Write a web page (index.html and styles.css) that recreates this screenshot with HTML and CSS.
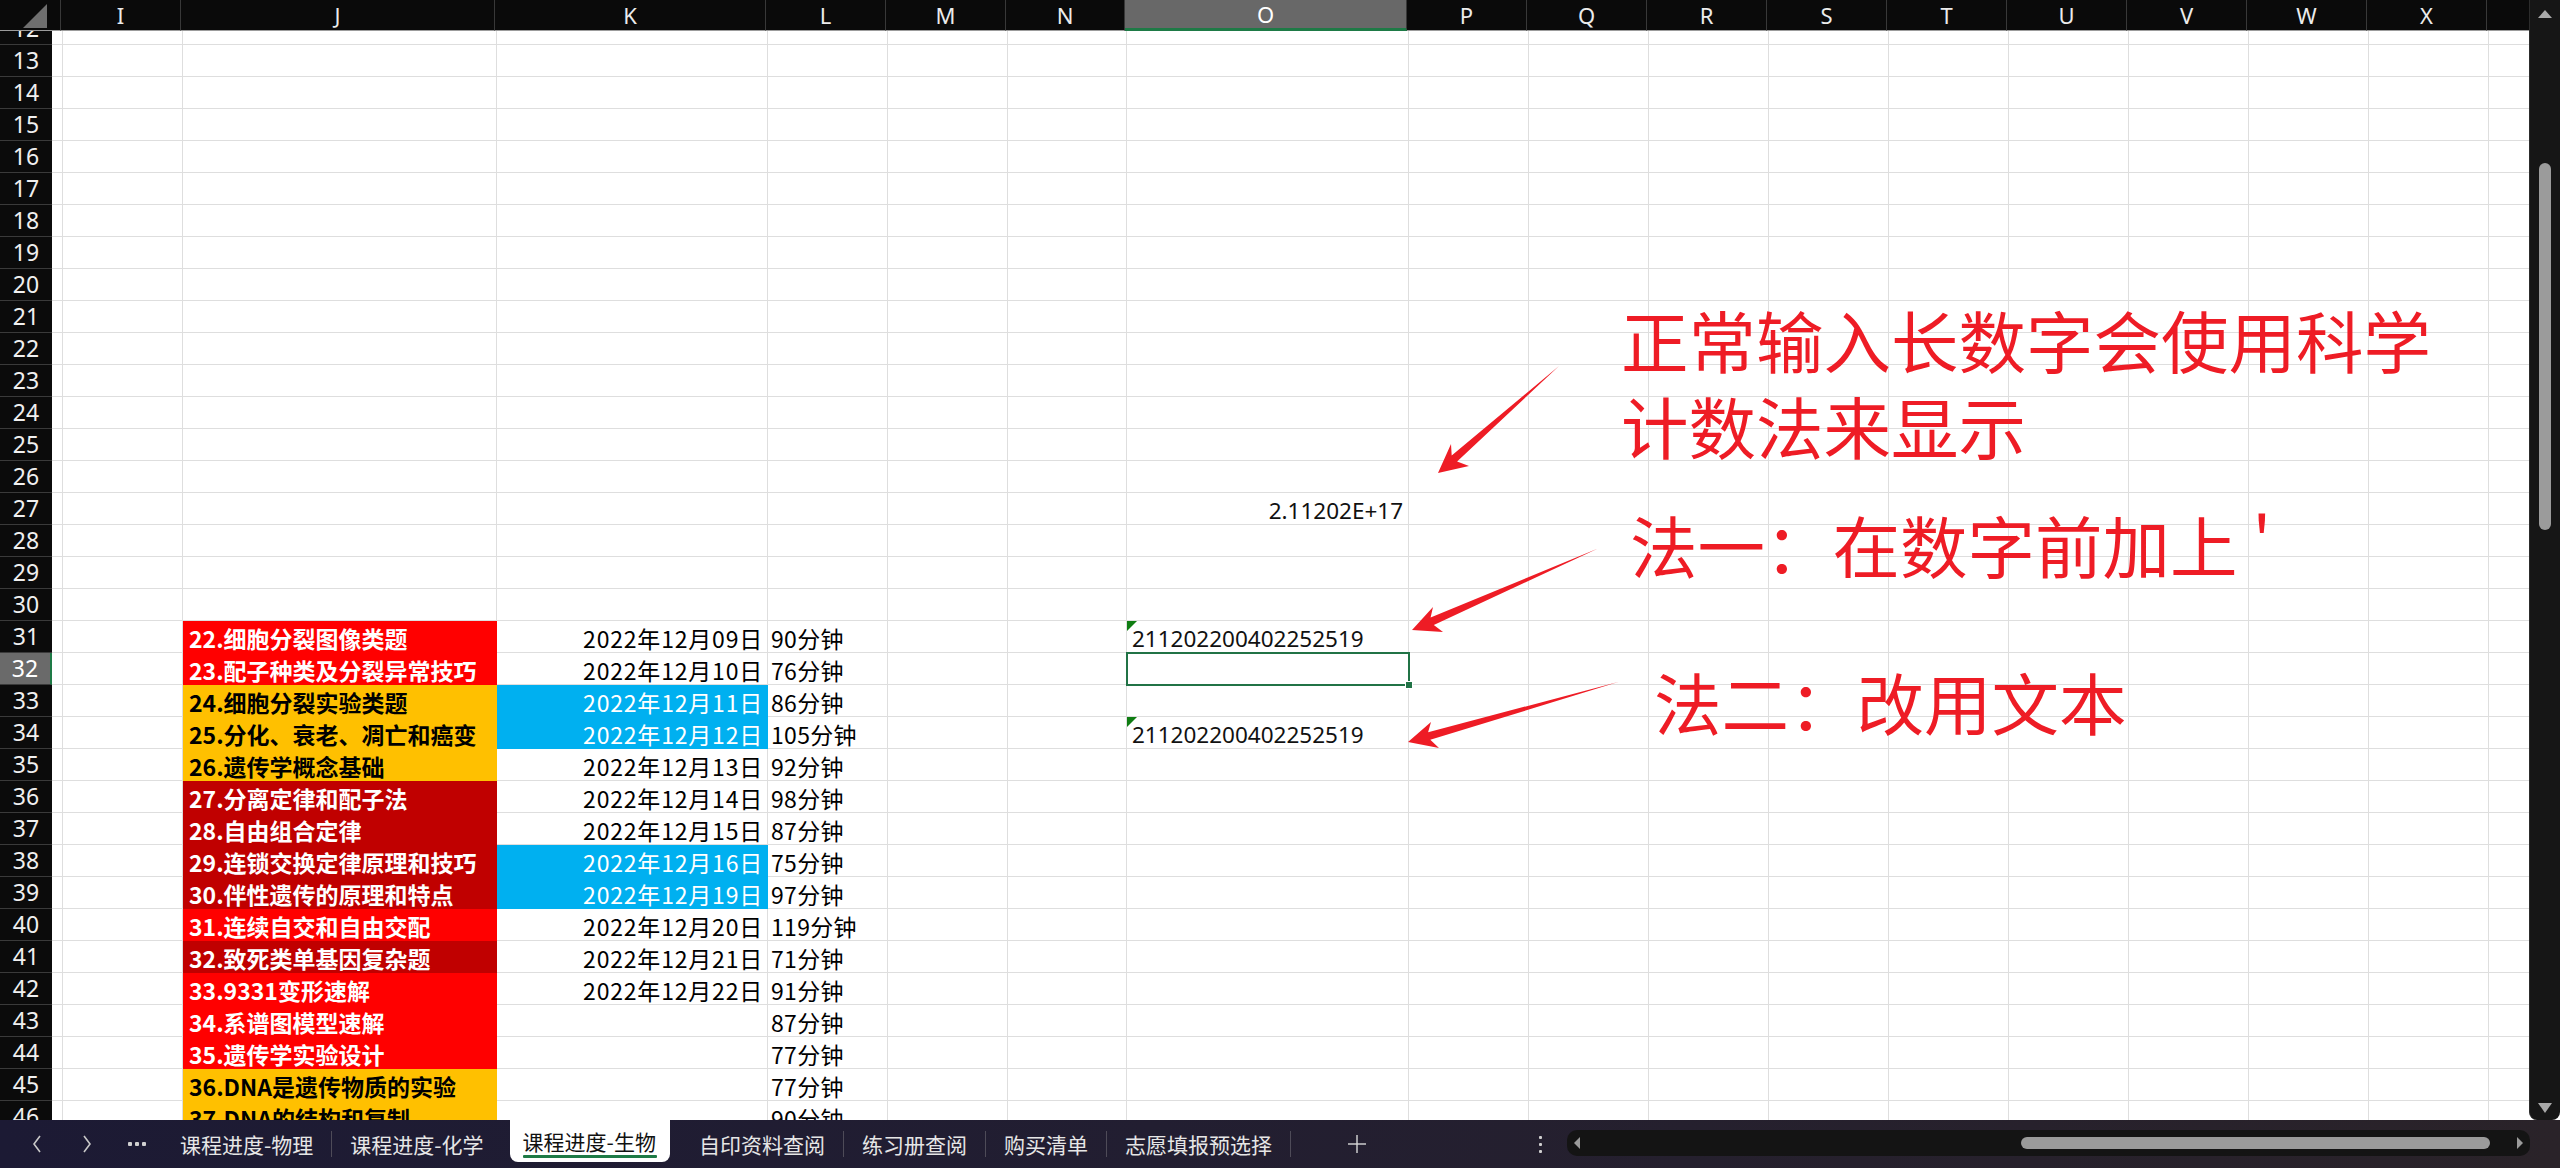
FILE: index.html
```html
<!DOCTYPE html>
<html lang="zh-CN">
<head>
<meta charset="utf-8">
<title>课程进度-生物</title>
<link rel="stylesheet" href="styles.css">
</head>
<body>
<div class="app">
  <div class="main">
    <div class="sheet">
      <div class="colhdr">
        <div class="corner"><span class="tri"></span></div>
        <div class="hc wh"></div>
        <div class="hc wi">I</div>
        <div class="hc wj">J</div>
        <div class="hc wk">K</div>
        <div class="hc wl">L</div>
        <div class="hc wm">M</div>
        <div class="hc wn">N</div>
        <div class="hc wo sel">O</div>
        <div class="hc ws">P</div>
        <div class="hc ws">Q</div>
        <div class="hc ws">R</div>
        <div class="hc ws">S</div>
        <div class="hc ws">T</div>
        <div class="hc ws">U</div>
        <div class="hc ws">V</div>
        <div class="hc ws">W</div>
        <div class="hc ws">X</div>
        <div class="hc wy"></div>
      </div>

      <div class="row partial"><div class="rh"><span>12</span></div><div class="c wh"></div><div class="c wi"></div><div class="c wj"></div><div class="c wk"></div><div class="c wl"></div><div class="c wm"></div><div class="c wn"></div><div class="c wo"></div><div class="c rest"></div></div>
      <div class="row"><div class="rh">13</div><div class="c wh"></div><div class="c wi"></div><div class="c wj"></div><div class="c wk"></div><div class="c wl"></div><div class="c wm"></div><div class="c wn"></div><div class="c wo"></div><div class="c rest"></div></div>
      <div class="row"><div class="rh">14</div><div class="c wh"></div><div class="c wi"></div><div class="c wj"></div><div class="c wk"></div><div class="c wl"></div><div class="c wm"></div><div class="c wn"></div><div class="c wo"></div><div class="c rest"></div></div>
      <div class="row"><div class="rh">15</div><div class="c wh"></div><div class="c wi"></div><div class="c wj"></div><div class="c wk"></div><div class="c wl"></div><div class="c wm"></div><div class="c wn"></div><div class="c wo"></div><div class="c rest"></div></div>
      <div class="row"><div class="rh">16</div><div class="c wh"></div><div class="c wi"></div><div class="c wj"></div><div class="c wk"></div><div class="c wl"></div><div class="c wm"></div><div class="c wn"></div><div class="c wo"></div><div class="c rest"></div></div>
      <div class="row"><div class="rh">17</div><div class="c wh"></div><div class="c wi"></div><div class="c wj"></div><div class="c wk"></div><div class="c wl"></div><div class="c wm"></div><div class="c wn"></div><div class="c wo"></div><div class="c rest"></div></div>
      <div class="row"><div class="rh">18</div><div class="c wh"></div><div class="c wi"></div><div class="c wj"></div><div class="c wk"></div><div class="c wl"></div><div class="c wm"></div><div class="c wn"></div><div class="c wo"></div><div class="c rest"></div></div>
      <div class="row"><div class="rh">19</div><div class="c wh"></div><div class="c wi"></div><div class="c wj"></div><div class="c wk"></div><div class="c wl"></div><div class="c wm"></div><div class="c wn"></div><div class="c wo"></div><div class="c rest"></div></div>
      <div class="row"><div class="rh">20</div><div class="c wh"></div><div class="c wi"></div><div class="c wj"></div><div class="c wk"></div><div class="c wl"></div><div class="c wm"></div><div class="c wn"></div><div class="c wo"></div><div class="c rest"></div></div>
      <div class="row"><div class="rh">21</div><div class="c wh"></div><div class="c wi"></div><div class="c wj"></div><div class="c wk"></div><div class="c wl"></div><div class="c wm"></div><div class="c wn"></div><div class="c wo"></div><div class="c rest"></div></div>
      <div class="row"><div class="rh">22</div><div class="c wh"></div><div class="c wi"></div><div class="c wj"></div><div class="c wk"></div><div class="c wl"></div><div class="c wm"></div><div class="c wn"></div><div class="c wo"></div><div class="c rest"></div></div>
      <div class="row"><div class="rh">23</div><div class="c wh"></div><div class="c wi"></div><div class="c wj"></div><div class="c wk"></div><div class="c wl"></div><div class="c wm"></div><div class="c wn"></div><div class="c wo"></div><div class="c rest"></div></div>
      <div class="row"><div class="rh">24</div><div class="c wh"></div><div class="c wi"></div><div class="c wj"></div><div class="c wk"></div><div class="c wl"></div><div class="c wm"></div><div class="c wn"></div><div class="c wo"></div><div class="c rest"></div></div>
      <div class="row"><div class="rh">25</div><div class="c wh"></div><div class="c wi"></div><div class="c wj"></div><div class="c wk"></div><div class="c wl"></div><div class="c wm"></div><div class="c wn"></div><div class="c wo"></div><div class="c rest"></div></div>
      <div class="row"><div class="rh">26</div><div class="c wh"></div><div class="c wi"></div><div class="c wj"></div><div class="c wk"></div><div class="c wl"></div><div class="c wm"></div><div class="c wn"></div><div class="c wo"></div><div class="c rest"></div></div>
      <div class="row"><div class="rh">27</div><div class="c wh"></div><div class="c wi"></div><div class="c wj"></div><div class="c wk"></div><div class="c wl"></div><div class="c wm"></div><div class="c wn"></div><div class="c wo num align-end">2.11202E+17</div><div class="c rest"></div></div>
      <div class="row"><div class="rh">28</div><div class="c wh"></div><div class="c wi"></div><div class="c wj"></div><div class="c wk"></div><div class="c wl"></div><div class="c wm"></div><div class="c wn"></div><div class="c wo"></div><div class="c rest"></div></div>
      <div class="row"><div class="rh">29</div><div class="c wh"></div><div class="c wi"></div><div class="c wj"></div><div class="c wk"></div><div class="c wl"></div><div class="c wm"></div><div class="c wn"></div><div class="c wo"></div><div class="c rest"></div></div>
      <div class="row"><div class="rh">30</div><div class="c wh"></div><div class="c wi"></div><div class="c wj"></div><div class="c wk"></div><div class="c wl"></div><div class="c wm"></div><div class="c wn"></div><div class="c wo"></div><div class="c rest"></div></div>
      <div class="row"><div class="rh">31</div><div class="c wh"></div><div class="c wi"></div><div class="c wj topic red">22.细胞分裂图像类题</div><div class="c wk date">2022年12月09日</div><div class="c wl dur">90分钟</div><div class="c wm"></div><div class="c wn"></div><div class="c wo num flag">211202200402252519</div><div class="c rest"></div></div>
      <div class="row"><div class="rh sel">32</div><div class="c wh"></div><div class="c wi"></div><div class="c wj topic red">23.配子种类及分裂异常技巧</div><div class="c wk date">2022年12月10日</div><div class="c wl dur">76分钟</div><div class="c wm"></div><div class="c wn"></div><div class="c wo active"><span class="handle"></span></div><div class="c rest"></div></div>
      <div class="row"><div class="rh">33</div><div class="c wh"></div><div class="c wi"></div><div class="c wj topic yel">24.细胞分裂实验类题</div><div class="c wk date blue">2022年12月11日</div><div class="c wl dur">86分钟</div><div class="c wm"></div><div class="c wn"></div><div class="c wo"></div><div class="c rest"></div></div>
      <div class="row"><div class="rh">34</div><div class="c wh"></div><div class="c wi"></div><div class="c wj topic yel">25.分化、衰老、凋亡和癌变</div><div class="c wk date blue">2022年12月12日</div><div class="c wl dur">105分钟</div><div class="c wm"></div><div class="c wn"></div><div class="c wo num flag">211202200402252519</div><div class="c rest"></div></div>
      <div class="row"><div class="rh">35</div><div class="c wh"></div><div class="c wi"></div><div class="c wj topic yel">26.遗传学概念基础</div><div class="c wk date">2022年12月13日</div><div class="c wl dur">92分钟</div><div class="c wm"></div><div class="c wn"></div><div class="c wo"></div><div class="c rest"></div></div>
      <div class="row"><div class="rh">36</div><div class="c wh"></div><div class="c wi"></div><div class="c wj topic dred">27.分离定律和配子法</div><div class="c wk date">2022年12月14日</div><div class="c wl dur">98分钟</div><div class="c wm"></div><div class="c wn"></div><div class="c wo"></div><div class="c rest"></div></div>
      <div class="row"><div class="rh">37</div><div class="c wh"></div><div class="c wi"></div><div class="c wj topic dred">28.自由组合定律</div><div class="c wk date">2022年12月15日</div><div class="c wl dur">87分钟</div><div class="c wm"></div><div class="c wn"></div><div class="c wo"></div><div class="c rest"></div></div>
      <div class="row"><div class="rh">38</div><div class="c wh"></div><div class="c wi"></div><div class="c wj topic dred">29.连锁交换定律原理和技巧</div><div class="c wk date blue">2022年12月16日</div><div class="c wl dur">75分钟</div><div class="c wm"></div><div class="c wn"></div><div class="c wo"></div><div class="c rest"></div></div>
      <div class="row"><div class="rh">39</div><div class="c wh"></div><div class="c wi"></div><div class="c wj topic dred">30.伴性遗传的原理和特点</div><div class="c wk date blue">2022年12月19日</div><div class="c wl dur">97分钟</div><div class="c wm"></div><div class="c wn"></div><div class="c wo"></div><div class="c rest"></div></div>
      <div class="row"><div class="rh">40</div><div class="c wh"></div><div class="c wi"></div><div class="c wj topic red">31.连续自交和自由交配</div><div class="c wk date">2022年12月20日</div><div class="c wl dur">119分钟</div><div class="c wm"></div><div class="c wn"></div><div class="c wo"></div><div class="c rest"></div></div>
      <div class="row"><div class="rh">41</div><div class="c wh"></div><div class="c wi"></div><div class="c wj topic dred">32.致死类单基因复杂题</div><div class="c wk date">2022年12月21日</div><div class="c wl dur">71分钟</div><div class="c wm"></div><div class="c wn"></div><div class="c wo"></div><div class="c rest"></div></div>
      <div class="row"><div class="rh">42</div><div class="c wh"></div><div class="c wi"></div><div class="c wj topic red">33.9331变形速解</div><div class="c wk date">2022年12月22日</div><div class="c wl dur">91分钟</div><div class="c wm"></div><div class="c wn"></div><div class="c wo"></div><div class="c rest"></div></div>
      <div class="row"><div class="rh">43</div><div class="c wh"></div><div class="c wi"></div><div class="c wj topic red">34.系谱图模型速解</div><div class="c wk date"></div><div class="c wl dur">87分钟</div><div class="c wm"></div><div class="c wn"></div><div class="c wo"></div><div class="c rest"></div></div>
      <div class="row"><div class="rh">44</div><div class="c wh"></div><div class="c wi"></div><div class="c wj topic red">35.遗传学实验设计</div><div class="c wk date"></div><div class="c wl dur">77分钟</div><div class="c wm"></div><div class="c wn"></div><div class="c wo"></div><div class="c rest"></div></div>
      <div class="row"><div class="rh">45</div><div class="c wh"></div><div class="c wi"></div><div class="c wj topic yel">36.DNA是遗传物质的实验</div><div class="c wk date"></div><div class="c wl dur">77分钟</div><div class="c wm"></div><div class="c wn"></div><div class="c wo"></div><div class="c rest"></div></div>
      <div class="row"><div class="rh">46</div><div class="c wh"></div><div class="c wi"></div><div class="c wj topic yel">37.DNA的结构和复制</div><div class="c wk date"></div><div class="c wl dur">90分钟</div><div class="c wm"></div><div class="c wn"></div><div class="c wo"></div><div class="c rest"></div></div>
    </div>

    <div class="vscroll">
      <span class="arrow-up"></span>
      <span class="vthumb"></span>
      <span class="arrow-down"></span>
    </div>

    <div class="notes">
      <svg class="arrows" width="2560" height="1120" viewBox="0 0 2560 1120">
        <polygon points="1559,366 1451.7,455.4 1451,444 1438,473 1469,466 1457.1,461.4"/>
        <polygon points="1598,548.6 1430.6,617.5 1433,607 1412,630 1443,632 1433.8,624.9"/>
        <polygon points="1619,681.8 1428.1,732.2 1431,722 1408,742 1439,748 1430.3,739.8"/>
      </svg>
      <div class="note n1">正常输入长数字会使用科学</div>
      <div class="note n2">计数法来显示</div>
      <div class="note n3">法一：在数字前加上 '</div>
      <div class="note n4">法二：改用文本</div>
    </div>
  </div>

  <div class="tabbar">
    <div class="nav">
      <span class="navbtn"><svg width="10" height="18" viewBox="0 0 10 18"><polyline points="8,1 2,9 8,17"/></svg></span>
      <span class="navbtn"><svg width="10" height="18" viewBox="0 0 10 18"><polyline points="2,1 8,9 2,17"/></svg></span>
      <span class="navbtn dots"><i></i><i></i><i></i></span>
    </div>
    <div class="tab">课程进度-物理</div>
    <span class="sep"></span>
    <div class="tab">课程进度-化学</div>
    <div class="tab current">课程进度-生物</div>
    <div class="tab">自印资料查阅</div>
    <span class="sep"></span>
    <div class="tab">练习册查阅</div>
    <span class="sep"></span>
    <div class="tab">购买清单</div>
    <span class="sep"></span>
    <div class="tab">志愿填报预选择</div>
    <span class="sep"></span>
    <span class="plus"><svg width="20" height="20" viewBox="0 0 20 20"><line x1="10" y1="1" x2="10" y2="19"/><line x1="1" y1="10" x2="19" y2="10"/></svg></span>
    <div class="tools">
      <span class="more"><i></i><i></i><i></i></span>
      <div class="hscroll">
        <span class="arrow-left"></span>
        <span class="hthumb"></span>
        <span class="arrow-right"></span>
      </div>
    </div>
  </div>
</div>
</body>
</html>
```

FILE: styles.css
```css
* { box-sizing: border-box; margin: 0; padding: 0; }
html, body { width: 2560px; height: 1168px; overflow: hidden; background: #fff; }
body { font-family: "Noto Sans CJK SC", "Noto Sans", sans-serif; }

.app { display: flex; flex-direction: column; width: 2560px; height: 1168px; }
.main { display: flex; height: 1120px; flex: none; position: relative; }
.sheet { width: 2529px; height: 1120px; display: flex; flex-direction: column; overflow: hidden; flex: none; }

/* widths */
.wh { width: 9px; }
.wi { width: 120px; }
.wj { width: 314px; }
.wk { width: 271px; }
.wl { width: 120px; }
.wm { width: 120px; }
.wn { width: 119px; }
.wo { width: 282px; }
.ws { width: 120px; }
.wy { width: 42px; }
.rest { width: 1122px; }

/* column header */
.colhdr { display: flex; height: 31px; flex: none; background: #0a0a0a; }
.colhdr > div {
  flex: none; height: 31px;
  border-right: 1px solid #383838;
  border-bottom: 1px solid #9c9c9c;
  color: #ececec;
  font: 400 22px/30px "Noto Sans", sans-serif;
  text-align: center;
}
.colhdr .corner { width: 52px; position: relative; border-right: none; }
.corner .tri {
  position: absolute; left: 23px; top: 4px;
  width: 0; height: 0;
  border-left: 24px solid transparent;
  border-bottom: 24px solid #6f6f6f;
}
.colhdr .wy { border-right: none; }
.colhdr .sel { background: #686868; border-bottom: 3px solid #1e7a46; line-height: 28px; color: #fff; }

/* rows */
.row { display: flex; height: 32px; flex: none; }
.row.partial { height: 14px; }
.rh {
  flex: none; width: 52px; height: 32px;
  background: #0b0b0b; color: #f0f0f0;
  border-bottom: 1px solid #3a3a3a;
  font: 400 23px/31px "Noto Sans", sans-serif;
  text-align: center;
  overflow: hidden;
}
.row.partial .rh { height: 14px; display: flex; flex-direction: column; justify-content: flex-end; }
.row.partial .rh span { display: block; line-height: 32px; flex: none; }
.rh.sel { background: #6a6a6a; color: #fff; border-right: 2px solid #1e7a46; }

.c {
  flex: none; height: 32px;
  border-right: 1px solid #dedede;
  border-bottom: 1px solid #dedede;
  display: flex; align-items: flex-end;
  padding: 0 5px 2px 5px;
  white-space: nowrap;
  font-size: 23px; line-height: 1;
  color: #000;
}
.row.partial .c { height: 14px; }
.c.rest {
  border-right: none;
  background-image: repeating-linear-gradient(to right, transparent 0 119px, #dedede 119px 120px);
}

.topic { font-weight: 700; padding-left: 6px; }
.red { background: #ff0000; border-color: #ff0000; color: #fff; }
.dred { background: #c00000; border-color: #c00000; color: #fff; }
.yel { background: #ffc000; border-color: #ffc000; color: #000; }
.date { justify-content: flex-end; padding-right: 4px; letter-spacing: 0.8px; }
.blue { background: #00b0f0; border-color: #00b0f0; color: #fff; }
.dur { padding-left: 3px; letter-spacing: 0.3px; }

.num { font-family: "Noto Sans", sans-serif; font-size: 22.5px; color: #111; }
.align-end { justify-content: flex-end; padding-right: 5px; }
.flag { position: relative; padding-left: 5px; }
.flag::before {
  content: ""; position: absolute; left: 0; top: 0;
  width: 0; height: 0;
  border-top: 10px solid #0f7d12;
  border-right: 10px solid transparent;
}
.active { position: relative; }
.active::after {
  content: ""; position: absolute; left: -1px; top: -1px; right: -2px; bottom: -2px;
  border: 2px solid #217346; z-index: 2;
}
.active .handle {
  position: absolute; right: -5px; bottom: -5px; width: 8px; height: 8px;
  background: #217346; border: 1px solid #fff; z-index: 3;
}

/* vertical scrollbar */
.vscroll {
  flex: none; width: 31px; height: 1120px;
  background: #161616; border-left: 1px solid #2c2c2c;
  display: flex; flex-direction: column; align-items: center;
  border-radius: 0 0 8px 8px;
}
.arrow-up {
  margin-top: 10px; width: 0; height: 0;
  border-left: 7px solid transparent; border-right: 7px solid transparent;
  border-bottom: 8px solid #a9a9a9;
}
.vthumb { margin-top: 145px; width: 12px; height: 367px; border-radius: 6px; background: #9b9b9b; }
.arrow-down {
  margin-top: auto; margin-bottom: 7px; width: 0; height: 0;
  border-left: 7px solid transparent; border-right: 7px solid transparent;
  border-top: 10px solid #a9a9a9;
}

/* annotations */
.notes { position: absolute; left: 0; top: 0; width: 2560px; height: 1120px; pointer-events: none; }
.arrows { position: absolute; left: 0; top: 0; }
.arrows polygon { fill: #ee1c25; }
.note {
  position: absolute; white-space: nowrap;
  font: 400 67.5px/1 "Noto Sans CJK SC", sans-serif;
  color: #ee1c25;
}
.n1 { left: 1621px; top: 305px; }
.n2 { left: 1621px; top: 391px; }
.n3 { left: 1630px; top: 510px; }
.n4 { left: 1654px; top: 667px; }

/* tab bar */
.tabbar {
  flex: none; height: 48px; display: flex; align-items: center;
  background: linear-gradient(90deg, #1c1a34 0%, #221e31 45%, #2a2329 100%);
  color: #e6e6e6;
}
.nav { display: flex; height: 48px; padding-left: 12px; flex: none; }
.navbtn { width: 50px; height: 48px; display: flex; align-items: center; justify-content: center; }
.navbtn polyline { fill: none; stroke: #c8c8c8; stroke-width: 1.6; }
.dots { gap: 3px; }
.dots i, .more i { display: block; width: 4px; height: 4px; background: #d0d0d0; border-radius: 1px; }
.tab {
  flex: none; height: 48px; padding: 0 18px;
  display: flex; align-items: center;
  font-size: 21px; white-space: nowrap;
}
.tab.current {
  align-self: flex-start; height: 42px;
  margin: 0 11px 0 8px; padding: 0 14px 0 13px;
  background: #fff; color: #111;
  border-radius: 0 0 8px 8px;
  position: relative;
}
.tab.current::after {
  content: ""; position: absolute; left: 13px; right: 13px; bottom: 4px; height: 3px;
  background: #1e7a46; border-radius: 1px;
}
.sep { flex: none; width: 1px; height: 26px; background: #4e4b58; }
.plus { flex: none; width: 40px; height: 48px; margin-left: 46px; display: flex; align-items: center; justify-content: center; }
.plus line { stroke: #d8d8d8; stroke-width: 1.4; }
.tools { margin-left: auto; display: flex; align-items: center; gap: 17px; margin-right: 30px; }
.more { width: 20px; display: flex; flex-direction: column; align-items: center; gap: 4px; }
.more i { width: 3px; height: 3px; }
.hscroll {
  width: 963px; height: 26px; background: #141414; border-radius: 10px;
  display: flex; align-items: center; padding: 0 7px;
  margin-top: -2px;
}
.arrow-left {
  width: 0; height: 0;
  border-top: 6px solid transparent; border-bottom: 6px solid transparent;
  border-right: 6px solid #9b9b9b;
}
.hthumb { margin-left: auto; width: 469px; height: 12px; border-radius: 6px; background: #9b9b9b; margin-right: 27px; }
.arrow-right {
  width: 0; height: 0;
  border-top: 6px solid transparent; border-bottom: 6px solid transparent;
  border-left: 6px solid #9b9b9b;
}
```
